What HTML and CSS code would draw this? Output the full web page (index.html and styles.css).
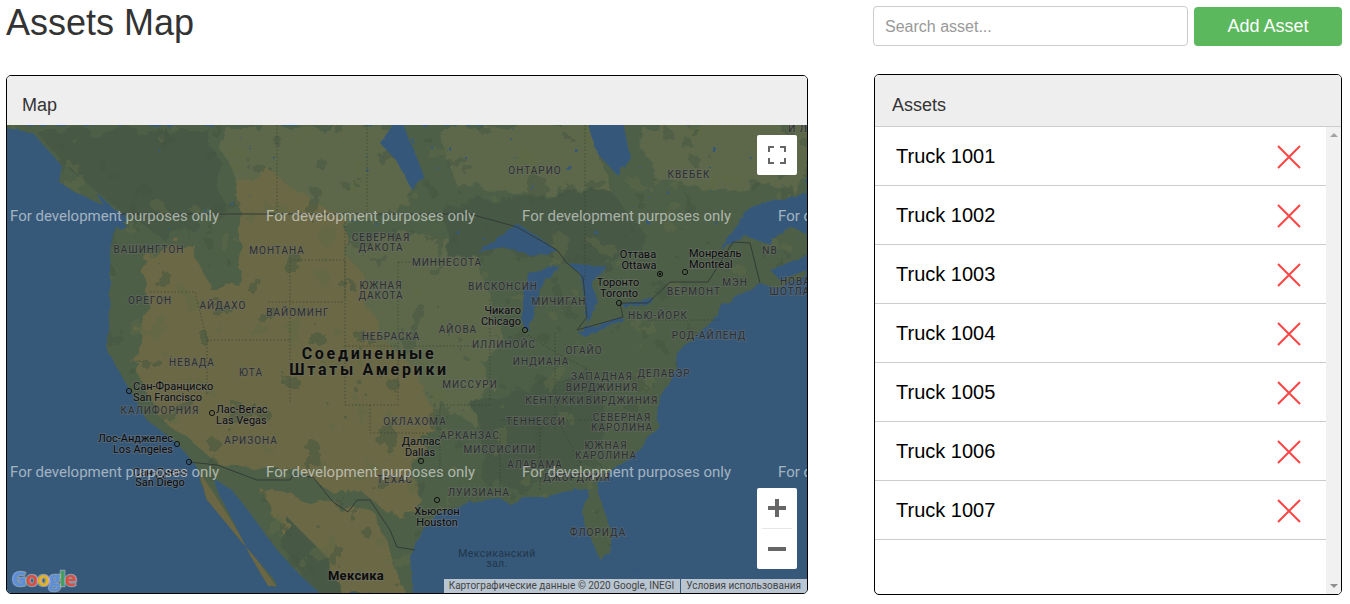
FILE: index.html
```html
<!DOCTYPE html>
<html lang="ru">

<head>
    <meta charset="UTF-8">
    <title>Assets Map</title>
    <link rel="stylesheet" href="styles.css">
</head>

<body>

    <header class="top-bar">
        <h1>Assets Map</h1>
        <div class="top-actions">
            <input class="search-input" type="text" placeholder="Search asset...">
            <button class="add-btn">Add Asset</button>
        </div>
    </header>

    <main class="content">
        <section class="panel map-panel">
            <div class="panel-title map-title">Map</div>
            <div class="map">
                <svg class="map-canvas" viewBox="7 125 800 468" xmlns="http://www.w3.org/2000/svg">
                    <defs>
                        <filter id="coast" x="-5%" y="-5%" width="110%" height="110%">
                            <feTurbulence type="fractalNoise" baseFrequency="0.09" numOctaves="3" seed="4"/>
                            <feDisplacementMap in="SourceGraphic" scale="6"/>
                        </filter>
                        <filter id="rough" x="-10%" y="-10%" width="120%" height="120%">
                            <feTurbulence type="fractalNoise" baseFrequency="0.045" numOctaves="4" seed="9"/>
                            <feDisplacementMap in="SourceGraphic" scale="26"/>
                        </filter>
                        <filter id="blotchDark" x="0" y="0" width="100%" height="100%" color-interpolation-filters="sRGB">
                            <feTurbulence type="fractalNoise" baseFrequency="0.04" numOctaves="4" seed="3"/>
                            <feColorMatrix values="0 0 0 0 0.27  0 0 0 0 0.34  0 0 0 0 0.26  1 0 0 0 0"/>
                            <feComponentTransfer><feFuncA type="discrete" tableValues="0 0 0 0 0 0 0 1 1 1"/></feComponentTransfer>
                        </filter>
                        <filter id="blotchLight" x="0" y="0" width="100%" height="100%" color-interpolation-filters="sRGB">
                            <feTurbulence type="fractalNoise" baseFrequency="0.035" numOctaves="4" seed="21"/>
                            <feColorMatrix values="0 0 0 0 0.37  0 0 0 0 0.41  0 0 0 0 0.28  1 0 0 0 0"/>
                            <feComponentTransfer><feFuncA type="discrete" tableValues="0 0 0 0 0 0 0 1 1 1"/></feComponentTransfer>
                        </filter>
                        <filter id="blotchLakes" x="0" y="0" width="100%" height="100%" color-interpolation-filters="sRGB">
                            <feTurbulence type="fractalNoise" baseFrequency="0.11" numOctaves="3" seed="14"/>
                            <feColorMatrix values="0 0 0 0 0.21  0 0 0 0 0.35  0 0 0 0 0.48  1 0 0 0 0"/>
                            <feComponentTransfer><feFuncA type="discrete" tableValues="0 0 0 0 0 0 0 0 0 0 0 0 0 1 1 1"/></feComponentTransfer>
                        </filter>
                        <clipPath id="landClip">
                            <path d="M7 128 33 133 63 167 60 183 85 197 123 213 128 222 116 224 112 235 110 253 110 293 107 350 118 370 130 390 147 420 177 443 197 467 207 500 240 540 273 578 277 587 268 586 250 555 235 525 218 492 213 478 232 490 255 520 277 550 300 575 320 593 413 593 410 557 415 540 440 512 470 502 500 498 512 506 520 497 545 497 575 489 590 490 582 510 584 523 600 560 610 553 612 533 597 490 597 483 640 450 657 427 660 397 677 367 677 353 683 347 717 317 720 307 760 283 775 288 807 277 807 125 7 125Z"/>
                        </clipPath>
                    </defs>

                    <rect class="ocean" x="7" y="125" width="800" height="468"/>

                    <g filter="url(#coast)">
                        <path class="land" d="M7 128 33 133 63 167 60 183 85 197 123 213 128 222 116 224 112 235 110 253 110 293 107 350 118 370 130 390 147 420 177 443 197 467 207 500 240 540 273 578 277 587 268 586 250 555 235 525 218 492 213 478 232 490 255 520 277 550 300 575 320 593 413 593 410 557 415 540 440 512 470 502 500 498 512 506 520 497 545 497 575 489 590 490 582 510 584 523 600 560 610 553 612 533 597 490 597 483 640 450 657 427 660 397 677 367 677 353 683 347 717 317 720 307 760 283 775 288 807 277 807 125 7 125Z"/>
                    </g>

                    <g clip-path="url(#landClip)">
                        <g filter="url(#rough)">
                            <path class="prairie" d="M225 125H400L410 205 340 225 250 205 225 160Z"/>
                            <path class="prairie" d="M440 125H590L610 190 520 195 450 180Z"/>
                            <path class="prairie" d="M640 125H807V180L720 195 650 175Z"/>
                            <path class="prairie" d="M345 235H470L500 330 470 420 390 400 345 330Z"/>
                            <path class="forest" d="M35 130H210L225 205 165 240 120 210 70 170Z"/>
                            <path class="forest" d="M440 205 610 190 650 240 600 270 520 250 450 260Z"/>
                            <path class="forest" d="M470 400 590 370 610 420 570 480 490 490Z"/>
                            <path class="tan" d="M240 185 270 170 300 195 340 215 345 255 365 275 372 310 382 340 418 370 436 430 410 460 420 500 395 520 360 490 335 495 300 470 220 465 190 440 160 420 135 370 140 320 150 270 165 250 190 240 210 290 235 280 240 240Z"/>
                            <path class="tan" d="M262 490 340 505 372 510 395 560 402 593 330 593 290 550Z"/>
                            <path class="forest" d="M285 515 330 560 340 593H315L285 550Z"/>
                        </g>
                        <rect class="blotch" x="7" y="125" width="800" height="468" filter="url(#blotchLight)"/>
                        <rect class="blotch" x="7" y="125" width="800" height="468" filter="url(#blotchDark)"/>
                        <rect x="150" y="125" width="657" height="115" filter="url(#blotchLakes)"/>
                        <path class="tan" d="M198 470 215 495 250 550 276 586 268 586 240 540 207 500Z"/>
                    </g>

                    <g class="water" filter="url(#coast)">
                        <path d="M588 122 623 122 630 157 617 175 597 153Z"/>
                        <path d="M393 125 404 125 424 178 412 190 396 160 380 143Z"/>
                        <path d="M477 253 517 223 557 250 537 257 505 248Z"/>
                        <path d="M528 273 560 265 540 287 529 330 523 327 523 300Z"/>
                        <path d="M567 263 607 267 593 283 597 302 587 323 583 297 580 273Z"/>
                        <path d="M577 332 610 320 623 317 622 322 584 336Z"/>
                        <path d="M623 305 653 297 651 304 625 308Z"/>
                        <path d="M720 250 750 207 807 193V235L790 225 770 245 745 235Z"/>
                        <path d="M97 193 110 205 127 227 120 230 105 212Z"/>
                        <path d="M770 270 807 255V270L780 280Z"/>
                        <path d="M625 541 645 541 644 550 636 545Z"/>
                        <path d="M631 563 637 566 638 578 633 572Z"/>
                    </g>

                    <g class="state-lines">
                        <path d="M277 125V214M367 125V214M150 292H195L207 340V395M207 340H290V404M290 340V260H345M345 262V300M345 212V405M268 302H345M345 346H398M345 405H400M370 405V433H430M398 262V400M398 262H465M415 346H490M490 300V400M490 405H440V480M528 335 560 355 590 370M555 333V430M500 420H610M500 434V490M540 425V490M560 425 590 480M585 125V280M648 320H720"/>
                    </g>

                    <path class="border-line" d="M118 214H470L517 227 557 250 567 263 583 277 587 317 577 330 623 317 620 303 648 303 670 282H708L733 242 750 243 760 283"/>
                    <path class="border-line" d="M189 462 217 465 257 480H290L293 475 313 477 333 502 348 512 357 500H370L390 530 397 547 415 550"/>

                    <g class="state">
                        <text x="149" y="253">ВАШИНГТОН</text>
                        <text x="150" y="304">ОРЕГОН</text>
                        <text x="223" y="309">АЙДАХО</text>
                        <text x="277" y="254">МОНТАНА</text>
                        <text x="298" y="316">ВАЙОМИНГ</text>
                        <text x="381" y="241">СЕВЕРНАЯ</text>
                        <text x="381" y="251">ДАКОТА</text>
                        <text x="381" y="289">ЮЖНАЯ</text>
                        <text x="381" y="299">ДАКОТА</text>
                        <text x="447" y="266">МИННЕСОТА</text>
                        <text x="391" y="340">НЕБРАСКА</text>
                        <text x="458" y="333">АЙОВА</text>
                        <text x="503" y="290">ВИСКОНСИН</text>
                        <text x="559" y="305">МИЧИГАН</text>
                        <text x="504" y="348">ИЛЛИНОЙС</text>
                        <text x="584" y="354">ОГАЙО</text>
                        <text x="541" y="365">ИНДИАНА</text>
                        <text x="192" y="366">НЕВАДА</text>
                        <text x="251" y="376">ЮТА</text>
                        <text x="160" y="414">КАЛИФОРНИЯ</text>
                        <text x="251" y="444">АРИЗОНА</text>
                        <text x="415" y="425">ОКЛАХОМА</text>
                        <text x="470" y="439">АРКАНЗАС</text>
                        <text x="470" y="388">МИССУРИ</text>
                        <text x="536" y="425">ТЕННЕССИ</text>
                        <text x="500" y="453">МИССИСИПИ</text>
                        <text x="535" y="468">АЛАБАМА</text>
                        <text x="577" y="481">ДЖОРДЖИЯ</text>
                        <text x="479" y="496">ЛУИЗИАНА</text>
                        <text x="598" y="536">ФЛОРИДА</text>
                        <text x="395" y="483">ТЕХАС</text>
                        <text x="602" y="380">ЗАПАДНАЯ</text>
                        <text x="602" y="391">ВИРДЖИНИЯ</text>
                        <text x="664" y="377">ДЕЛАВЭР</text>
                        <text x="555" y="404">КЕНТУККИ</text>
                        <text x="622" y="404">ВИРДЖИНИЯ</text>
                        <text x="622" y="421">СЕВЕРНАЯ</text>
                        <text x="622" y="431">КАРОЛИНА</text>
                        <text x="606" y="449">ЮЖНАЯ</text>
                        <text x="606" y="459">КАРОЛИНА</text>
                        <text x="709" y="339">РОД-АЙЛЕНД</text>
                        <text x="658" y="319">НЬЮ-ЙОРК</text>
                        <text x="694" y="295">ВЕРМОНТ</text>
                        <text x="735" y="286">МЭН</text>
                        <text x="770" y="254">NB</text>
                        <text x="799" y="285">НОВАЯ</text>
                        <text x="806" y="295">ШОТЛАНДИЯ</text>
                        <text x="535" y="174">ОНТАРИО</text>
                        <text x="689" y="178">КВЕБЕК</text>
                        <text x="798" y="132">И Л</text>
                    </g>

                    <g class="city">
                        <text x="638" y="258" class="mid">Оттава</text>
                        <text x="639" y="269" class="mid">Ottawa</text>
                        <text x="689" y="257">Монреаль</text>
                        <text x="689" y="268">Montréal</text>
                        <text x="618" y="286" class="mid">Торонто</text>
                        <text x="619" y="297" class="mid">Toronto</text>
                        <text x="521" y="314" class="end">Чикаго</text>
                        <text x="521" y="325" class="end">Chicago</text>
                        <text x="133" y="390">Сан-Франциско</text>
                        <text x="133" y="401">San Francisco</text>
                        <text x="216" y="413">Лас-Вегас</text>
                        <text x="216" y="424">Las Vegas</text>
                        <text x="173" y="442" class="end">Лос-Анджелес</text>
                        <text x="173" y="453" class="end">Los Angeles</text>
                        <text x="160" y="476" class="mid">Сан-Диего</text>
                        <text x="160" y="486" class="mid">San Diego</text>
                        <text x="421" y="445" class="mid">Даллас</text>
                        <text x="420" y="456" class="mid">Dallas</text>
                        <text x="437" y="515" class="mid">Хьюстон</text>
                        <text x="437" y="526" class="mid">Houston</text>
                    </g>

                    <g class="city-dots">
                        <circle cx="660" cy="274" r="2.6"/>
                        <circle cx="685" cy="272" r="2.6"/>
                        <circle cx="619" cy="303" r="2.6"/>
                        <circle cx="525" cy="330" r="2.6"/>
                        <circle cx="129" cy="391" r="2.6"/>
                        <circle cx="212" cy="413" r="2.6"/>
                        <circle cx="177" cy="444" r="2.6"/>
                        <circle cx="189" cy="462" r="2.6"/>
                        <circle cx="421" cy="461" r="2.6"/>
                        <circle cx="437" cy="500" r="2.6"/>
                    </g>
                    <circle class="capital-dot" cx="660" cy="274" r="1.2"/>

                    <text class="country" x="369" y="359">Соединенные</text>
                    <text class="country" x="369" y="375">Штаты Америки</text>
                    <text class="country country-small" x="356" y="580">Мексика</text>

                    <text class="sea" x="497" y="557">Мексиканский</text>
                    <text class="sea" x="497" y="567">зал.</text>

                    <g class="watermark">
                        <text x="10" y="221">For development purposes only</text>
                        <text x="266" y="221">For development purposes only</text>
                        <text x="522" y="221">For development purposes only</text>
                        <text x="778" y="221">For development purposes only</text>
                        <text x="10" y="477">For development purposes only</text>
                        <text x="266" y="477">For development purposes only</text>
                        <text x="522" y="477">For development purposes only</text>
                        <text x="778" y="477">For development purposes only</text>
                    </g>

                    <text class="google" x="12" y="586"><tspan class="g-blue">G</tspan><tspan class="g-red">o</tspan><tspan class="g-yellow">o</tspan><tspan class="g-blue">g</tspan><tspan class="g-green">l</tspan><tspan class="g-red">e</tspan></text>
                </svg>

                <button class="map-btn fullscreen-btn" aria-label="Fullscreen">
                    <svg width="18" height="18" viewBox="0 0 18 18">
                        <path d="M1 6V1H6M12 1H17V6M17 12V17H12M6 17H1V12" fill="none" stroke="#666" stroke-width="2"/>
                    </svg>
                </button>

                <div class="zoom-control">
                    <button class="zoom-btn" aria-label="Zoom in">
                        <svg width="18" height="18" viewBox="0 0 18 18"><path d="M7 0H11V7H18V11H11V18H7V11H0V7H7Z" fill="#666"/></svg>
                    </button>
                    <div class="zoom-divider"></div>
                    <button class="zoom-btn" aria-label="Zoom out">
                        <svg width="18" height="18" viewBox="0 0 18 18"><path d="M0 7H18V11H0Z" fill="#666"/></svg>
                    </button>
                </div>

                <div class="attribution">
                    <span class="attribution-item">Картографические данные © 2020 Google, INEGI</span>
                    <span class="attribution-item">Условия использования</span>
                </div>
            </div>
        </section>

        <section class="panel assets-panel">
            <div class="panel-title assets-title">Assets</div>
            <div class="assets-body">
                <ul class="asset-list">
                    <li class="asset-item"><span>Truck 1001</span><svg class="remove-icon" viewBox="0 0 24 24"><path d="M1 1 23 23M23 1 1 23"/></svg></li>
                    <li class="asset-item"><span>Truck 1002</span><svg class="remove-icon" viewBox="0 0 24 24"><path d="M1 1 23 23M23 1 1 23"/></svg></li>
                    <li class="asset-item"><span>Truck 1003</span><svg class="remove-icon" viewBox="0 0 24 24"><path d="M1 1 23 23M23 1 1 23"/></svg></li>
                    <li class="asset-item"><span>Truck 1004</span><svg class="remove-icon" viewBox="0 0 24 24"><path d="M1 1 23 23M23 1 1 23"/></svg></li>
                    <li class="asset-item"><span>Truck 1005</span><svg class="remove-icon" viewBox="0 0 24 24"><path d="M1 1 23 23M23 1 1 23"/></svg></li>
                    <li class="asset-item"><span>Truck 1006</span><svg class="remove-icon" viewBox="0 0 24 24"><path d="M1 1 23 23M23 1 1 23"/></svg></li>
                    <li class="asset-item"><span>Truck 1007</span><svg class="remove-icon" viewBox="0 0 24 24"><path d="M1 1 23 23M23 1 1 23"/></svg></li>
                </ul>
                <div class="scrollbar">
                    <span class="arrow-up"></span>
                    <span class="arrow-down"></span>
                </div>
            </div>
        </section>
    </main>

</body>

</html>
```

FILE: styles.css
```css
/* General */
html,
body {
    height: 100%;
}

body {
    font-family: "Liberation Sans", Arial, sans-serif;
    color: #333;
    background-color: #fff;
    margin: 0;
    padding: 0 8px 0 6px;
    box-sizing: border-box;
    overflow: hidden;
}

/* Top bar */
.top-bar {
    display: flex;
    justify-content: space-between;
    height: 74px;
}

h1 {
    font-size: 36px;
    font-weight: 400;
    line-height: 40px;
    margin: 3px 0 0;
}

.top-actions {
    display: flex;
    gap: 6px;
    padding-top: 6px;
    height: 40px;
}

.search-input {
    width: 315px;
    height: 40px;
    box-sizing: border-box;
    padding: 2px 11px 0;
    border: 1px solid #ccc;
    border-radius: 4px;
    font-family: inherit;
    font-size: 16px;
    color: #333;
}

.search-input::placeholder {
    color: #999;
}

.add-btn {
    width: 148px;
    height: 39px;
    margin-top: 1px;
    border: none;
    border-radius: 4px;
    background-color: #5cb85c;
    color: #fff;
    font-family: inherit;
    font-size: 18px;
}

/* Panels */
.content {
    display: flex;
    justify-content: space-between;
    align-items: flex-start;
}

.panel {
    border: 1px solid #000;
    border-radius: 5px;
    box-sizing: border-box;
    overflow: hidden;
    display: flex;
    flex-direction: column;
}

.map-panel {
    width: 802px;
    height: 519px;
    margin-top: 1px;
}

.assets-panel {
    width: 468px;
    height: 521px;
}

.panel-title {
    background-color: #eee;
    font-size: 18px;
    line-height: 20px;
}

.map-title {
    height: 49px;
    padding: 19px 15px 0;
    box-sizing: border-box;
}

.assets-title {
    height: 52px;
    padding: 20px 17px 0;
    box-sizing: border-box;
    border-bottom: 1px solid #ccc;
}

/* Map */
.map {
    position: relative;
    flex: 1;
    overflow: hidden;
}

.map-canvas {
    display: block;
    width: 800px;
    height: 468px;
}

.ocean,
.water path {
    fill: #36597a;
}

.land {
    fill: #4e5f47;
}

.prairie {
    fill: #5b6849;
}

.forest {
    fill: #475944;
}

.tan {
    fill: #6b6744;
}

.blotch {
    opacity: 0.5;
}

.state-lines path {
    fill: none;
    stroke: #2f3a2f;
    stroke-width: 0.8;
    stroke-dasharray: 1.5 2;
    opacity: 0.7;
}

.border-line {
    fill: none;
    stroke: #333b36;
    stroke-width: 1;
}

.state text {
    font-family: Roboto, sans-serif;
    font-size: 10px;
    letter-spacing: 1px;
    text-anchor: middle;
    fill: #2c2f30;
    stroke: rgba(110, 110, 110, 0.45);
    stroke-width: 2px;
    paint-order: stroke;
}

.city text {
    font-family: Roboto, sans-serif;
    font-size: 11px;
    fill: #0c0c0c;
    stroke: rgba(120, 120, 120, 0.45);
    stroke-width: 2px;
    paint-order: stroke;
}

.city .mid {
    text-anchor: middle;
}

.city .end {
    text-anchor: end;
}

.city-dots circle {
    fill: none;
    stroke: #111;
    stroke-width: 1;
}

.capital-dot {
    fill: #111;
}

.country {
    font-family: Roboto, sans-serif;
    font-size: 16px;
    font-weight: 700;
    letter-spacing: 2.7px;
    text-anchor: middle;
    fill: #0d0d0d;
    stroke: rgba(120, 120, 120, 0.4);
    stroke-width: 2px;
    paint-order: stroke;
}

.country-small {
    font-size: 13px;
    letter-spacing: 0.3px;
}

.sea {
    font-family: Roboto, sans-serif;
    font-size: 10.5px;
    text-anchor: middle;
    letter-spacing: 0.4px;
    fill: #22364a;
}

.watermark text {
    font-family: Roboto, sans-serif;
    font-size: 15px;
    fill: rgba(255, 255, 255, 0.55);
}

.google {
    font-family: "Open Sans", sans-serif;
    font-size: 20px;
    font-weight: 700;
    letter-spacing: -0.8px;
    stroke: rgba(190, 200, 210, 0.6);
    stroke-width: 2.5px;
    paint-order: stroke;
}

.g-blue {
    fill: #5a8fdc;
}

.g-red {
    fill: #dc4f3f;
}

.g-yellow {
    fill: #e6b11f;
}

.g-green {
    fill: #3f9f58;
}

/* Map controls */
.map-btn,
.zoom-control {
    position: absolute;
    right: 10px;
    width: 40px;
    background-color: #fff;
    border: none;
    border-radius: 2px;
    box-sizing: border-box;
    padding: 0;
}

.fullscreen-btn {
    top: 10px;
    height: 40px;
}

.map-btn svg,
.zoom-btn svg {
    display: block;
    margin: auto;
}

.zoom-control {
    top: 363px;
    height: 81px;
}

.zoom-btn {
    display: block;
    width: 40px;
    height: 40px;
    padding: 0;
    border: none;
    background: none;
}

.zoom-divider {
    height: 1px;
    margin: 0 5px;
    background-color: #e6e6e6;
}

.attribution {
    position: absolute;
    right: 0;
    bottom: 0;
    height: 14px;
    display: flex;
    gap: 1px;
    font-family: Roboto, sans-serif;
    font-size: 10px;
    line-height: 14px;
    color: #444;
}

.attribution-item {
    padding: 0 6px 0 5px;
    background-color: #b9c6d1;
}

/* Assets list */
.assets-body {
    flex: 1;
    display: flex;
    min-height: 0;
}

.asset-list {
    flex: 1;
    list-style-type: none;
    margin: 0;
    padding: 0;
}

.asset-item {
    height: 59px;
    box-sizing: border-box;
    display: flex;
    justify-content: space-between;
    align-items: center;
    padding: 0 25px 0 21px;
    border-bottom: 1px solid #ccc;
    color: #000;
    font-size: 20px;
}

.asset-item span {
    margin-top: 1px;
}

.remove-icon {
    width: 24px;
    height: 24px;
    margin-top: 2px;
}

.remove-icon path {
    fill: none;
    stroke: #f44;
    stroke-width: 2;
}

.scrollbar {
    width: 15px;
    background-color: #f1f1f1;
    display: flex;
    flex-direction: column;
    justify-content: space-between;
    align-items: center;
    padding: 6px 0;
    box-sizing: border-box;
}

.arrow-up,
.arrow-down {
    width: 0;
    height: 0;
    border-left: 4px solid transparent;
    border-right: 4px solid transparent;
}

.arrow-up {
    border-bottom: 4px solid #a3a3a3;
}

.arrow-down {
    border-top: 4px solid #8f8f8f;
}
```
